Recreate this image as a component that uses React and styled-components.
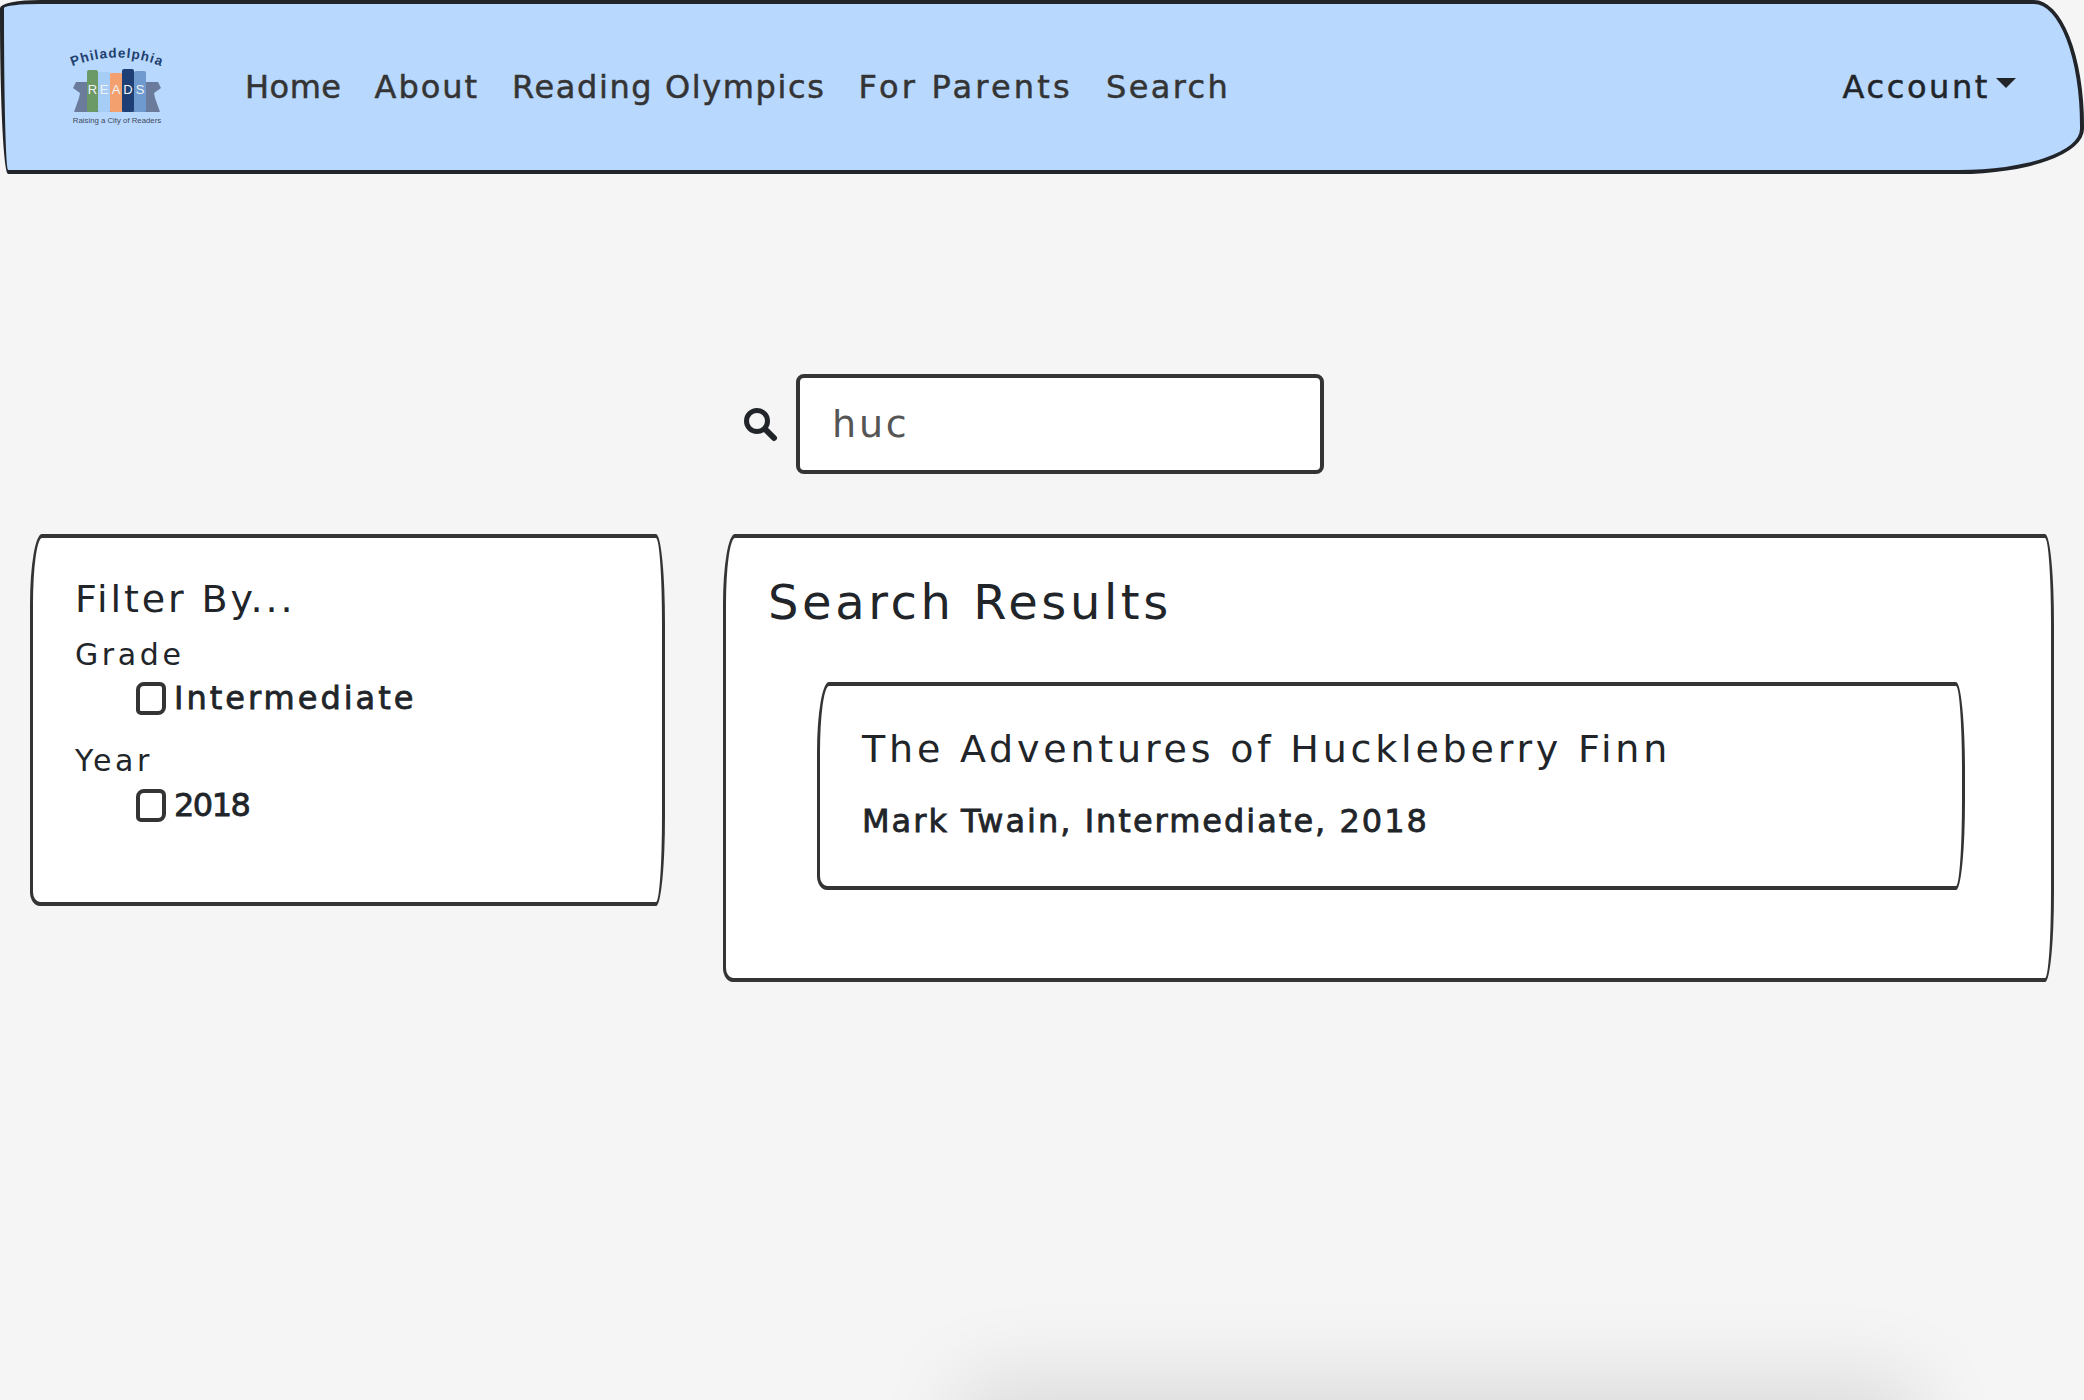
import styled, { createGlobalStyle } from "styled-components";

const GlobalStyle = createGlobalStyle`
  html, body {
    margin: 0;
    padding: 0;
    height: 100%;
    overflow: hidden;
    background: #f5f5f5;
    color: #212529;
    font-family: "DejaVu Sans", "Open Sans", sans-serif;
  }
  * {
    box-sizing: border-box;
  }
`;

const Page = styled.div`
  min-height: 1400px;
`;

const Navbar = styled.nav`
  display: flex;
  align-items: center;
  height: 174px;
  padding: 0 64px 0 68px;
  background: #b8d8fd;
  border: 4px solid #212529;
  border-radius: 40px 50px 125px 8px / 8px 125px 45px 160px;
`;

const Logo = styled.svg`
  display: block;
  width: 90px;
  height: 82px;
  margin-right: 83px;
  overflow: visible;
`;

const NavLinks = styled.div`
  display: flex;
  flex: 1;
  gap: 33px;
`;

const NavLink = styled.a`
  font-size: 32px;
  line-height: 44px;
  letter-spacing: ${(props) => props.$track}px;
  color: #343434;
  -webkit-text-stroke: 0.5px #343434;
`;

const Account = styled.a`
  display: flex;
  align-items: center;
  font-size: 32px;
  line-height: 44px;
  letter-spacing: 2.6px;
  color: #212529;
  -webkit-text-stroke: 0.5px #212529;
  &::after {
    content: "";
    margin: -8px 0 0 6px;
    border-top: 10px solid #212529;
    border-left: 10px solid transparent;
    border-right: 10px solid transparent;
  }
`;

const SearchRow = styled.div`
  display: flex;
  align-items: center;
  gap: 18px;
  margin: 200px 0 60px 742px;
`;

const SearchIcon = styled.svg`
  display: block;
  width: 36px;
  height: 36px;
`;

const SearchInput = styled.div`
  display: flex;
  align-items: center;
  width: 528px;
  height: 100px;
  padding: 0 32px;
  background: #fff;
  border: 4px solid #343434;
  border-radius: 8px;
  font-size: 38px;
  letter-spacing: 2.8px;
  color: #555;
`;

const Columns = styled.div`
  display: grid;
  grid-template-columns: 635px 1331px;
  gap: 58px;
  align-items: start;
  padding-left: 30px;
`;

const Card = styled.section`
  background: #fff;
  border-style: solid;
  border-color: #343434;
  border-width: 4px 3px;
  border-radius: 12px 9px 9px 10px / 70px 90px 90px 14px;
`;

const FilterCard = styled(Card)`
  height: 372px;
  padding: 36px 42px;
`;

const FilterTitle = styled.h4`
  margin: 0;
  font-size: 38px;
  line-height: 50px;
  letter-spacing: 2.9px;
  font-weight: 400;
`;

const GroupLabel = styled.div`
  margin-top: ${(props) => props.$top}px;
  font-size: 30px;
  line-height: 40px;
  letter-spacing: 3.6px;
`;

const Option = styled.label`
  display: flex;
  align-items: center;
  gap: 8px;
  height: 42px;
  margin: ${(props) => props.$top}px 0 0 61px;
  font-size: 32px;
  letter-spacing: ${(props) => props.$track}px;
  -webkit-text-stroke: 0.8px #212529;
`;

const Box = styled.span`
  width: 30px;
  height: 33px;
  border: 4px solid #343434;
  border-radius: 8px 6px 8px 5px;
`;

const ResultsCard = styled(Card)`
  height: 448px;
  padding: 32px 42px;
`;

const ResultsTitle = styled.h3`
  margin: 0;
  font-size: 48px;
  line-height: 64px;
  letter-spacing: 3.6px;
  font-weight: 400;
`;

const ResultCard = styled(Card)`
  width: 1148px;
  height: 208px;
  margin: 48px 0 0 49px;
  padding: 36px 42px;
`;

const ResultTitle = styled.h4`
  margin: 0;
  font-size: 38px;
  line-height: 54px;
  letter-spacing: 3.8px;
  font-weight: 400;
`;

const ResultMeta = styled.div`
  margin-top: 24px;
  font-size: 32px;
  line-height: 42px;
  letter-spacing: 2px;
  -webkit-text-stroke: 0.8px #212529;
`;

const BottomShadow = styled.div`
  position: fixed;
  left: 980px;
  top: 1400px;
  width: 918px;
  height: 300px;
  box-shadow: 0 0 80px 20px rgba(0, 0, 0, 0.11);
`;

function PhillyLogo() {
  return (
    <Logo viewBox="0 0 90 82">
      <defs>
        <path id="logo-arc" d="M-1 21 Q45 2 91 21" />
      </defs>
      <text fontFamily="'Liberation Sans', sans-serif" fontSize="13.5" fontWeight="700" fill="#21406f" letterSpacing="1">
        <textPath href="#logo-arc" startOffset="50%" textAnchor="middle">Philadelphia</textPath>
      </text>
      <path d="M1 42 L4 36 L14 36 H76 L86 36 L89 42 L82 47 L83 52 L88 66 H2 L7 52 L8 47Z" fill="#6a7b9c" />
      <rect x="15" y="24" width="11" height="42" rx="2" fill="#6c9a66" />
      <rect x="26" y="26" width="12" height="40" rx="1" fill="#a5cdf5" />
      <rect x="38" y="27" width="12" height="39" rx="1" fill="#f3a06e" />
      <rect x="50" y="23" width="12" height="43" rx="2" fill="#1d3f75" />
      <rect x="62" y="25" width="12" height="41" rx="2" fill="#6f9ad0" />
      <text x="20.5 32 44 56 68" y="48" textAnchor="middle" fontFamily="'Liberation Sans', sans-serif" fontSize="13" fill="#f0f3f6">READS</text>
      <text x="45" y="77" textAnchor="middle" fontFamily="'Liberation Sans', sans-serif" fontSize="7.8" fill="#3f4a5c">Raising a City of Readers</text>
    </Logo>
  );
}

export default function App() {
  return (
    <Page>
      <GlobalStyle />
      <Navbar>
        <PhillyLogo />
        <NavLinks>
          <NavLink $track={0.5}>Home</NavLink>
          <NavLink $track={2}>About</NavLink>
          <NavLink $track={1.6}>Reading Olympics</NavLink>
          <NavLink $track={3.2}>For Parents</NavLink>
          <NavLink $track={2.4}>Search</NavLink>
        </NavLinks>
        <Account>Account</Account>
      </Navbar>
      <SearchRow>
        <SearchIcon viewBox="0 0 36 36" fill="none" stroke="#212529" strokeLinecap="round">
          <circle cx="15" cy="15" r="10.5" strokeWidth="5" />
          <path d="M23 23 L32 32" strokeWidth="6" />
        </SearchIcon>
        <SearchInput>huc</SearchInput>
      </SearchRow>
      <Columns>
        <FilterCard>
          <FilterTitle>Filter By...</FilterTitle>
          <GroupLabel $top={11}>Grade</GroupLabel>
          <Option $top={2} $track={3}><Box />Intermediate</Option>
          <GroupLabel $top={22}>Year</GroupLabel>
          <Option $top={3} $track={-1.5}><Box />2018</Option>
        </FilterCard>
        <ResultsCard>
          <ResultsTitle>Search Results</ResultsTitle>
          <ResultCard>
            <ResultTitle>The Adventures of Huckleberry Finn</ResultTitle>
            <ResultMeta>Mark Twain, Intermediate, 2018</ResultMeta>
          </ResultCard>
        </ResultsCard>
      </Columns>
      <BottomShadow />
    </Page>
  );
}
